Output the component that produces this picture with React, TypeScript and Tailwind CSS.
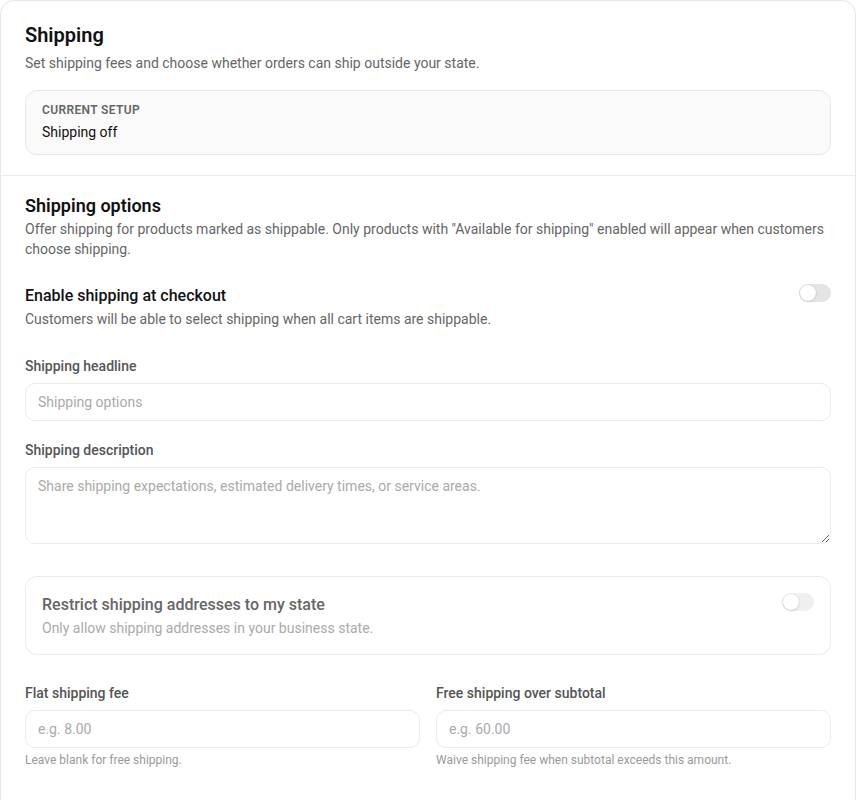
import { useState } from 'react'

function Toggle({ on, disabled, onClick }: { on: boolean; disabled?: boolean; onClick?: () => void }) {
  return (
    <button
      type="button"
      role="switch"
      aria-checked={on}
      disabled={disabled}
      onClick={onClick}
      className={`relative shrink-0 w-[32px] h-[18px] rounded-full transition-colors ${
        on ? 'bg-[#111]' : disabled ? 'bg-[#efefef]' : 'bg-[#e4e4e4]'
      }`}
    >
      <span
        className={`absolute top-[1px] w-[16px] h-[16px] rounded-full bg-white shadow-[0_0_0_0.5px_rgba(0,0,0,0.08),0_1px_2px_rgba(0,0,0,0.12)] transition-all ${
          on ? 'left-[15px]' : 'left-[1px]'
        }`}
      />
    </button>
  )
}

function Field({ label, placeholder, hint }: { label: string; placeholder: string; hint?: string }) {
  return (
    <div>
      <label className="block text-[14px] leading-5 font-medium text-[#555]">{label}</label>
      <input
        placeholder={placeholder}
        className="mt-[7px] block w-full h-[38px] rounded-[10px] border border-[#ebebeb] bg-white px-3 text-[14px] text-[#222] placeholder:text-[#aaa] outline-none"
      />
      {hint && <p className="mt-[4px] text-[12px] leading-4 text-[#9a9a9a]">{hint}</p>}
    </div>
  )
}

export default function App() {
  const [enabled, setEnabled] = useState(false)

  return (
    <div className="min-h-screen bg-white font-['Roboto',sans-serif]">
      <div className="border border-[#e6e6e6] rounded-t-[14px] bg-white">
        {/* Header */}
        <div className="px-6 pt-5 pb-[20px] border-b border-[#ececec]">
          <h1 className="text-[20px] leading-7 font-semibold text-[#111]">Shipping</h1>
          <p className="mt-1 text-[14px] leading-5 text-[#666]">
            Set shipping fees and choose whether orders can ship outside your state.
          </p>
          <div className="mt-[17px] rounded-[12px] border border-[#e8e8e8] bg-[#fafafa] px-4 pt-[11px] pb-3">
            <div className="text-[12px] leading-4 font-semibold tracking-[0.03em] uppercase text-[#666]">
              Current setup
            </div>
            <div className="mt-[4px] text-[14px] leading-5 text-[#111]">Shipping off</div>
          </div>
        </div>

        {/* Options */}
        <div className="px-6 pt-[17px] pb-8">
          <h2 className="text-[18px] leading-[26px] font-semibold text-[#111]">Shipping options</h2>
          <p className="text-[14px] leading-5 text-[#666]">
            Offer shipping for products marked as shippable. Only products with "Available for shipping" enabled will
            appear when customers choose shipping.
          </p>

          <div className="mt-[25px] flex items-start justify-between gap-4">
            <div>
              <div className="text-[16px] leading-6 font-medium text-[#111]">Enable shipping at checkout</div>
              <div className="mt-[1px] text-[14px] leading-5 text-[#666]">
                Customers will be able to select shipping when all cart items are shippable.
              </div>
            </div>
            <Toggle on={enabled} onClick={() => setEnabled(!enabled)} />
          </div>

          <div className="mt-[27px]">
            <Field label="Shipping headline" placeholder="Shipping options" />
          </div>

          <div className="mt-[19px]">
            <label className="block text-[14px] leading-5 font-medium text-[#555]">Shipping description</label>
            <textarea
              placeholder="Share shipping expectations, estimated delivery times, or service areas."
              className="mt-[7px] block w-full h-[77px] rounded-[10px] border border-[#ebebeb] bg-white px-3 py-[8px] text-[14px] leading-5 text-[#222] placeholder:text-[#aaa] outline-none resize-y"
            />
          </div>

          <div className="mt-[32px] rounded-[12px] border border-[#ececec] p-4 flex items-start justify-between gap-4">
            <div>
              <div className="text-[16px] leading-6 font-medium text-[#666]">
                Restrict shipping addresses to my state
              </div>
              <div className="mt-[1px] text-[14px] leading-5 text-[#aaa]">
                Only allow shipping addresses in your business state.
              </div>
            </div>
            <Toggle on={false} disabled />
          </div>

          <div className="mt-[28px] grid grid-cols-2 gap-4">
            <Field label="Flat shipping fee" placeholder="e.g. 8.00" hint="Leave blank for free shipping." />
            <Field
              label="Free shipping over subtotal"
              placeholder="e.g. 60.00"
              hint="Waive shipping fee when subtotal exceeds this amount."
            />
          </div>
        </div>
      </div>
    </div>
  )
}
